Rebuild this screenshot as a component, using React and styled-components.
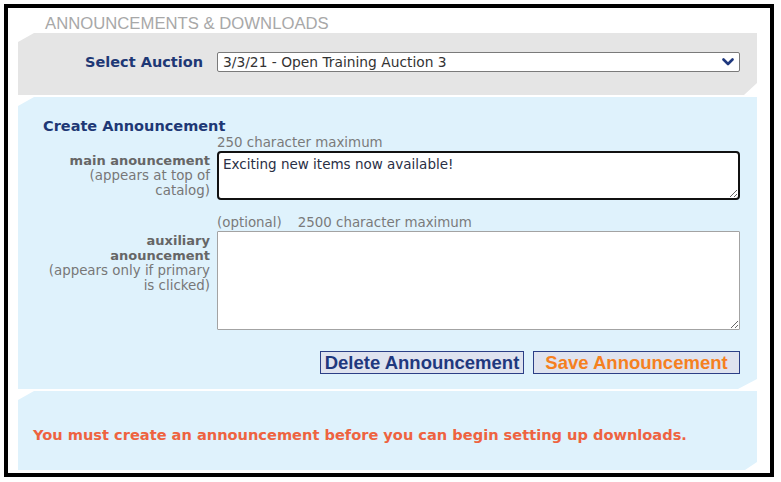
import React from 'react';
import styled, { createGlobalStyle } from 'styled-components';

// Basis halaman
const GlobalStyle = createGlobalStyle`
  html, body {
    margin: 0;
    padding: 0;
    background: #ffffff;
  }
  body {
    font-family: "DejaVu Sans", Verdana, sans-serif;
  }
`;

const Frame = styled.div`
  box-sizing: border-box;
  margin: 4px 0 0 4px;
  width: 770px;
  height: 473px;
  border: 4px solid #000;
  background: #fff;
  padding: 7px 13px 3px 10px;
  display: flex;
  flex-direction: column;
`;

const PageTitle = styled.h1`
  margin: 0 0 0 27px;
  font-family: "Liberation Sans", Arial, sans-serif;
  font-weight: normal;
  font-size: 16.7px;
  line-height: 18px;
  color: #a8a8a8;
`;

// panel dengan sudut terpotong (kiri atas & kanan bawah)
const Panel = styled.section`
  background: ${(p) => (p.$tone === 'gray' ? '#e5e5e5' : '#dff2fc')};
  clip-path: polygon(
    16px 0,
    100% 0,
    100% calc(100% - ${(p) => p.$cutH}px),
    calc(100% - ${(p) => p.$cutW}px) 100%,
    0 100%,
    0 9px
  );
  & + & {
    margin-top: 2px;
  }
`;

const SelectPanel = styled(Panel)`
  height: 62px;
  box-sizing: border-box;
  padding: 19px 17px 0 25px;
  display: grid;
  grid-template-columns: 167px 1fr;
  column-gap: 7px;
  align-items: center;
  align-content: start;
`;

const FormPanel = styled(Panel)`
  padding: 20px 17px 15px 25px;
  display: grid;
  grid-template-columns: 167px 1fr;
  column-gap: 7px;
  align-items: start;
`;

const NoticePanel = styled(Panel)`
  flex: 1;
  padding: 35px 15px 0 15px;
`;

const FieldLabel = styled.label`
  font-size: 14.5px;
  font-weight: bold;
  color: #1e3875;
  text-align: right;
  padding-right: 7px;
  line-height: 18px;
`;

const SelectWrap = styled.div`
  position: relative;
  height: 20px;
`;

const Select = styled.select`
  box-sizing: border-box;
  width: 100%;
  height: 20px;
  appearance: none;
  -webkit-appearance: none;
  border: 1px solid #7a7a7a;
  border-radius: 2px;
  background: #fff;
  padding: 0 0 0 5px;
  font-family: "DejaVu Sans", Verdana, sans-serif;
  font-size: 13.8px;
  color: #333;
  outline: none;
`;

const Chevron = styled.svg`
  position: absolute;
  right: 6px;
  top: 6px;
  pointer-events: none;
`;

const Heading = styled.h2`
  grid-column: 1 / -1;
  margin: 0;
  font-size: 14.5px;
  line-height: 18px;
  font-weight: bold;
  color: #1e3875;
`;

const Hint = styled.div`
  grid-column: 2;
  font-size: 13.4px;
  line-height: 16px;
  color: #7a7a7a;
  margin-top: ${(p) => p.$gap || 0}px;

  span + span {
    margin-left: 16px;
  }
`;

const SideLabel = styled.div`
  grid-column: 1;
  text-align: right;
  font-size: 13.4px;
  line-height: 15px;
  color: #777;
  padding-top: 2px;

  b {
    font-size: 13px;
    color: #666;
  }
`;

const TextArea = styled.textarea`
  grid-column: 2;
  box-sizing: border-box;
  width: 100%;
  height: ${(p) => p.$h}px;
  margin: 0;
  display: block;
  border: ${(p) => (p.$active ? '2px solid #111' : '1px solid #a3a3a3')};
  border-radius: ${(p) => (p.$active ? '4px' : '1px')};
  padding: ${(p) => (p.$active ? '3px 4px' : '3px 5px')};
  font-family: "DejaVu Sans", Verdana, sans-serif;
  font-size: 13.5px;
  line-height: 16px;
  color: #2a2f45;
  background: #fff;
  outline: none;
`;

const ButtonRow = styled.div`
  grid-column: 2;
  margin-top: 21px;
  display: flex;
  justify-content: flex-end;
  gap: 9px;
`;

const Button = styled.button`
  box-sizing: border-box;
  width: ${(p) => p.$w}px;
  height: 23px;
  padding: 0;
  border: 1px solid #2c3f86;
  background: #dfe3ef;
  font-family: "Liberation Sans", Arial, sans-serif;
  font-weight: bold;
  font-size: 18.5px;
  line-height: 21px;
  color: ${(p) => (p.$accent ? '#f5801f' : '#1f387e')};
  cursor: pointer;
`;

const Notice = styled.p`
  margin: 0;
  font-size: 14.6px;
  line-height: 18px;
  font-weight: bold;
  color: #ee6340;
`;

const App = () => {
  return (
    <>
      <GlobalStyle />
      <Frame>
        <PageTitle>ANNOUNCEMENTS &amp; DOWNLOADS</PageTitle>

        <SelectPanel $tone="gray" $cutW={13} $cutH={12}>
          <FieldLabel htmlFor="auction">Select Auction</FieldLabel>
          <SelectWrap>
            <Select id="auction" defaultValue="3">
              <option value="3">3/3/21 - Open Training Auction 3</option>
            </Select>
            <Chevron width="12" height="8" viewBox="0 0 12 8">
              <polyline points="1.5,1.5 6,6 10.5,1.5" fill="none" stroke="#1f387e" strokeWidth="2.6" strokeLinecap="round" strokeLinejoin="round" />
            </Chevron>
          </SelectWrap>
        </SelectPanel>

        <FormPanel $tone="blue" $cutW={19} $cutH={10}>
          <Heading>Create Announcement</Heading>

          <Hint>250 character maximum</Hint>
          <SideLabel>
            <b>main anouncement</b>
            <br />
            (appears at top of
            <br />
            catalog)
          </SideLabel>
          <TextArea $h={49} $active defaultValue="Exciting new items now available!" />

          <Hint $gap={15}>
            <span>(optional)</span>
            <span>2500 character maximum</span>
          </Hint>
          <SideLabel>
            <b>auxiliary</b>
            <br />
            <b>anouncement</b>
            <br />
            (appears only if primary
            <br />
            is clicked)
          </SideLabel>
          <TextArea $h={99} />

          <ButtonRow>
            <Button $w={204}>Delete Announcement</Button>
            <Button $w={207} $accent>Save Announcement</Button>
          </ButtonRow>
        </FormPanel>

        <NoticePanel $tone="blue" $cutW={12} $cutH={8}>
          <Notice>You must create an announcement before you can begin setting up downloads.</Notice>
        </NoticePanel>
      </Frame>
    </>
  );
};

export default App;
